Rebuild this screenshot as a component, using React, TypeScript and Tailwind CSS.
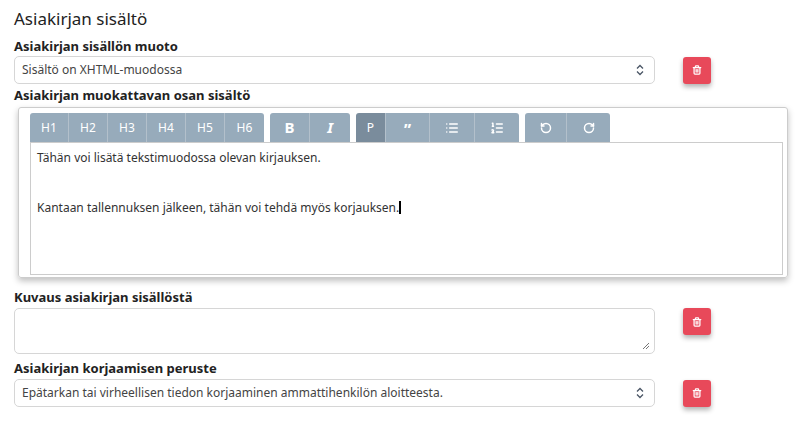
import { Trash2, RotateCcw, RotateCw, List, ListOrdered } from "lucide-react";

const HEADINGS = ["H1", "H2", "H3", "H4", "H5", "H6"];

function Chevrons() {
  return (
    <svg width="8" height="12" viewBox="0 0 8 12" className="text-gray-600">
      <path d="M1 4.5 L4 1.5 L7 4.5 M1 7.5 L4 10.5 L7 7.5" fill="none" stroke="currentColor" strokeWidth="1.3" />
    </svg>
  );
}

function DeleteButton() {
  return (
    <button className="w-[28px] h-[27px] bg-[#e8495a] rounded-[3px] flex items-center justify-center shadow-[0_3px_5px_rgba(0,0,0,0.3)]">
      <Trash2 size={10} color="white" strokeWidth={3} />
    </button>
  );
}

function Select({ value }: { value: string }) {
  return (
    <div className="w-[641px] h-[28px] border border-[#d6d6d6] rounded-[5px] flex items-center justify-between px-[7px] pr-[10px] text-[12px] text-[#444]">
      <span>{value}</span>
      <Chevrons />
    </div>
  );
}

function Btn({ children, active, w = "w-[39px]", serif }: { children: React.ReactNode; active?: boolean; w?: string; serif?: boolean }) {
  return (
    <div
      className={`${w} h-[29px] flex items-center justify-center text-white text-[12px] border-r border-[#b3c0cb] last:border-r-0 ${
        active ? "bg-[#7a8c9c]" : "bg-[#97abbb]"
      } ${serif ? "font-['Liberation_Serif'] text-[15px] font-bold" : ""}`}
    >
      {children}
    </div>
  );
}

export default function App() {
  return (
    <div className="w-[800px] h-[424px] bg-white font-['Liberation_Sans'] text-[#222] px-[14px] pt-[9px]">
      <h1 className="text-[17px] leading-[20px] mb-[9px]">Asiakirjan sisältö</h1>

      <div className="text-[13px] font-bold leading-[16px] mb-[2px]">Asiakirjan sisällön muoto</div>
      <div className="flex items-center gap-[28px]">
        <Select value="Sisältö on XHTML-muodossa" />
        <DeleteButton />
      </div>

      <div className="text-[13px] font-bold leading-[16px] mt-[3px] mb-[4px]">Asiakirjan muokattavan osan sisältö</div>
      <div className="ml-[4px] w-[770px] h-[171px] border border-[#ccc] rounded-[3px] shadow-[0_3px_6px_rgba(0,0,0,0.25)] pl-[11px] pr-[4px] pt-[5px] flex flex-col">
        <div className="flex gap-[6px]">
          <div className="flex rounded-t-[3px] overflow-hidden">
            {HEADINGS.map((h) => (
              <Btn key={h}>{h}</Btn>
            ))}
          </div>
          <div className="flex rounded-t-[3px] overflow-hidden">
            <Btn w="w-[40px]" serif>B</Btn>
            <Btn w="w-[40px]" serif><i>I</i></Btn>
          </div>
          <div className="flex rounded-t-[3px] overflow-hidden">
            <Btn w="w-[30px]" active>P</Btn>
            <Btn w="w-[44px]"><span className="font-['DejaVu_Sans'] font-bold text-[16px] leading-none mt-[5px]">”</span></Btn>
            <Btn w="w-[45px]"><List size={14} strokeWidth={2.5} /></Btn>
            <Btn w="w-[44px]"><ListOrdered size={14} strokeWidth={2.5} /></Btn>
          </div>
          <div className="flex rounded-t-[3px] overflow-hidden">
            <Btn w="w-[42px]"><RotateCcw size={12} strokeWidth={3} /></Btn>
            <Btn w="w-[43px]"><RotateCw size={12} strokeWidth={3} /></Btn>
          </div>
        </div>
        <div className="flex-1 mb-[2px] border border-[#ccc] px-[6px] pt-[7px] text-[12px] text-[#333] leading-[16px]">
          <p>Tähän voi lisätä tekstimuodossa olevan kirjauksen.</p>
          <p className="mt-[34px]">Kantaan tallennuksen jälkeen, tähän voi tehdä myös korjauksen.<span className="inline-block w-[2px] h-[13px] bg-black align-[-2px]" /></p>
        </div>
      </div>

      <div className="text-[13px] font-bold leading-[16px] mt-[11px] mb-[3px]">Kuvaus asiakirjan sisällöstä</div>
      <div className="flex items-start gap-[28px]">
        <div className="relative w-[641px] h-[46px] border border-[#d6d6d6] rounded-[5px]">
          <svg className="absolute right-[4px] bottom-[3px]" width="8" height="8" viewBox="0 0 8 8">
            <path d="M7 1 L1 7 M7 4 L4 7" stroke="#777" strokeWidth="1" />
          </svg>
        </div>
        <DeleteButton />
      </div>

      <div className="text-[13px] font-bold leading-[16px] mt-[6px] mb-[3px]">Asiakirjan korjaamisen peruste</div>
      <div className="flex items-center gap-[28px]">
        <Select value="Epätarkan tai virheellisen tiedon korjaaminen ammattihenkilön aloitteesta." />
        <DeleteButton />
      </div>

      <div className="mt-[17px] w-[774px] border-t border-[#e6e6e6]" />
    </div>
  );
}
